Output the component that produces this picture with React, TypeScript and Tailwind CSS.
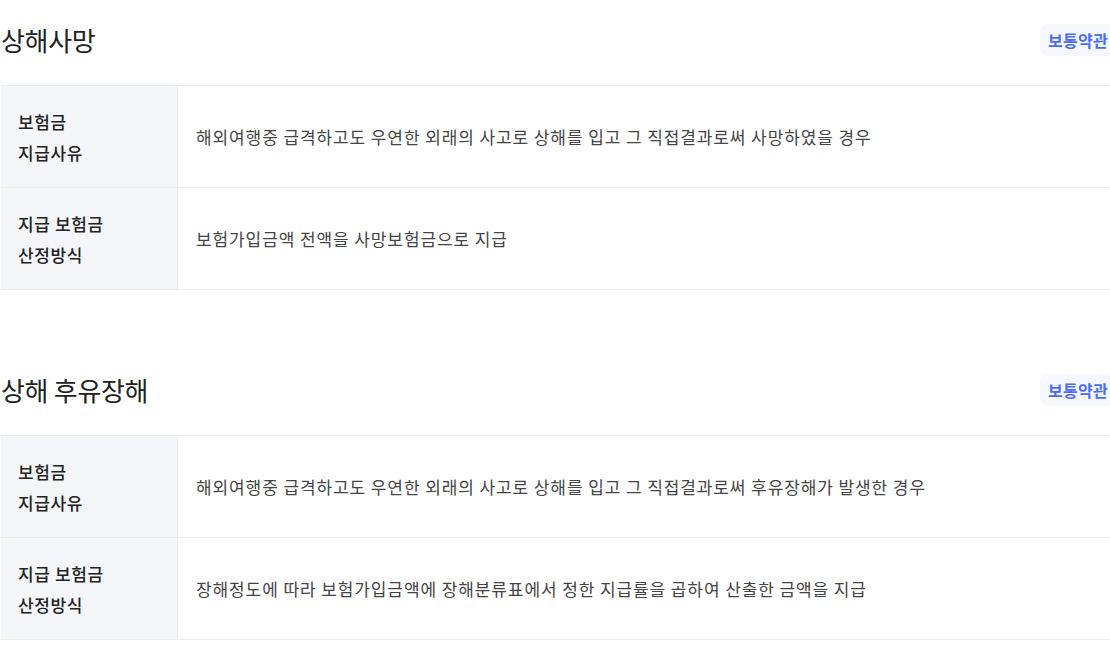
const sections = [
  {
    title: '상해사망',
    rows: [
      { label: ['보험금', '지급사유'], text: '해외여행중 급격하고도 우연한 외래의 사고로 상해를 입고 그 직접결과로써 사망하였을 경우' },
      { label: ['지급 보험금', '산정방식'], text: '보험가입금액 전액을 사망보험금으로 지급' },
    ],
  },
  {
    title: '상해 후유장해',
    rows: [
      { label: ['보험금', '지급사유'], text: '해외여행중 급격하고도 우연한 외래의 사고로 상해를 입고 그 직접결과로써 후유장해가 발생한 경우' },
      { label: ['지급 보험금', '산정방식'], text: '장해정도에 따라 보험가입금액에 장해분류표에서 정한 지급률을 곱하여 산출한 금액을 지급' },
    ],
  },
]

export default function App() {
  return (
    <div
      className="min-h-screen bg-white overflow-hidden"
      style={{ fontFamily: '"Noto Sans CJK KR", "Noto Sans", sans-serif' }}
    >
      <div className="w-[1116px] pl-px flex flex-col gap-[60px]">
        {sections.map((s) => (
          <section key={s.title}>
            <div className="flex items-center justify-between pt-[24px] pb-[29px]">
              <h2 className="text-[26px] leading-[32px] font-normal text-[#222] tracking-[-0.3px]">{s.title}</h2>
              <span className="h-[32px] px-[8px] flex items-center rounded-lg bg-[#f5f8ff] text-[16px] font-semibold text-[#4a6cf5] tracking-[0.3px]">
                보통약관
              </span>
            </div>
            <div className="border-t border-[#ececec]">
              {s.rows.map((r, i) => (
                <div key={i} className="flex border-b border-[#ececec] h-[102px]">
                  <div className="w-[177px] shrink-0 bg-[#f5f6fa] border-r border-[#eceef3] flex flex-col justify-center pl-[17px] text-[17px] leading-[31px] font-medium text-[#222] tracking-[0.6px]">
                    {r.label.map((l) => (
                      <span key={l}>{l}</span>
                    ))}
                  </div>
                  <div className="flex-1 flex items-center pl-[18px] text-[17px] text-[#444] tracking-[0.9px]">
                    {r.text}
                  </div>
                </div>
              ))}
            </div>
          </section>
        ))}
      </div>
    </div>
  )
}
